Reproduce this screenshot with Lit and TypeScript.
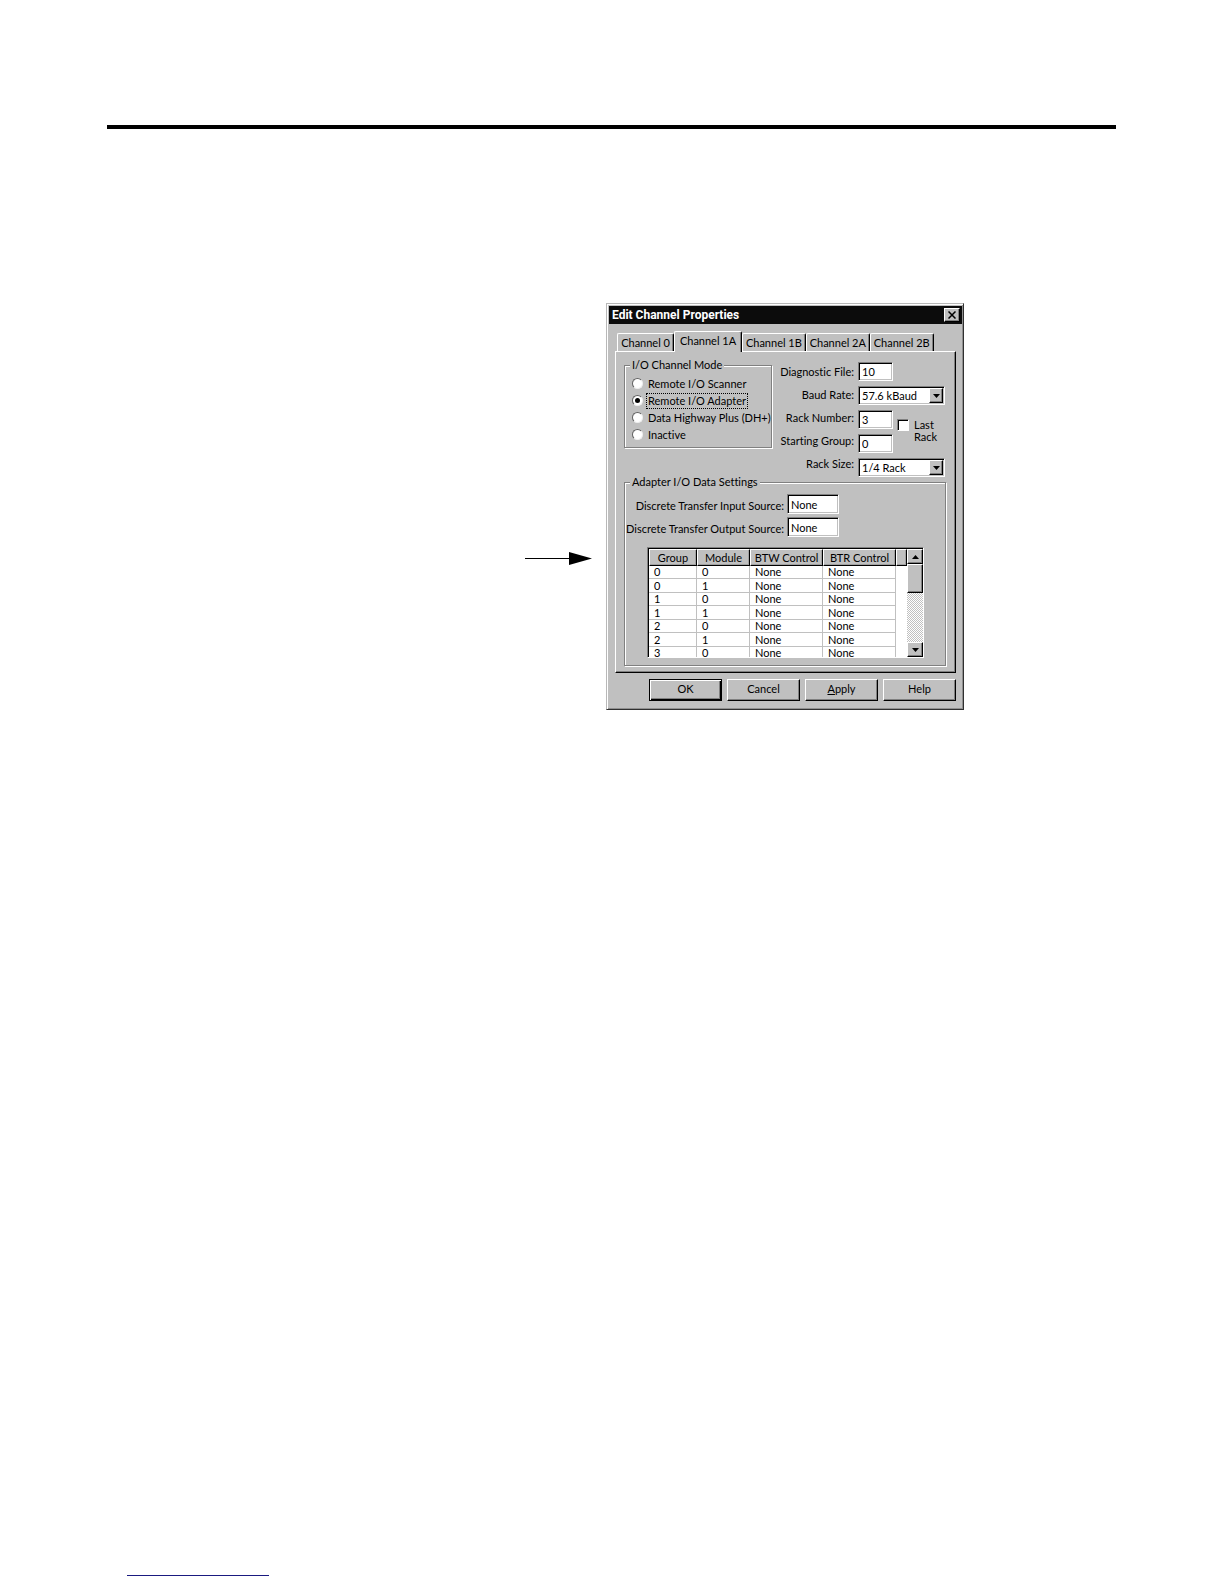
import { LitElement, css, html } from 'lit';
import { customElement, state } from 'lit/decorators.js';
import { classMap } from 'lit/directives/class-map.js';

const CHANNELS = ['Channel 0', 'Channel 1A', 'Channel 1B', 'Channel 2A', 'Channel 2B'];

const MODES = [
  'Remote I/O Scanner',
  'Remote I/O Adapter',
  'Data Highway Plus (DH+)',
  'Inactive',
];

const ROWS = [
  [0, 0],
  [0, 1],
  [1, 0],
  [1, 1],
  [2, 0],
  [2, 1],
  [3, 0],
];

@customElement('channel-dialog')
export class ChannelDialog extends LitElement {
  static styles = css`
    :host {
      display: block;
      box-sizing: border-box;
      padding: 2px 1px 8px 2px;
      border: 1px solid;
      border-color: #b8b8b8 #303030 #303030 #b8b8b8;
      background: #c0c0c0;
      box-shadow: inset 1px 1px #fff, inset -1px -1px #909090;
      color: #000;
      font-family: Lato, 'Liberation Sans', sans-serif;
      font-size: 11px;
      font-variant-ligatures: none;
      line-height: 14px;
    }
    * {
      box-sizing: border-box;
    }
    button, input, select {
      margin: 0;
      border-radius: 0;
      font: inherit;
      color: inherit;
      outline: none;
    }
    .title-bar {
      display: flex;
      align-items: center;
      justify-content: space-between;
      height: 18px;
      padding: 0 2px 0 3px;
      background: #0c0c0c;
      color: #fff;
    }
    .title {
      margin: 0;
      font: bold 12px/14px Roboto, 'Liberation Sans', sans-serif;
    }
    .raised {
      display: flex;
      align-items: center;
      justify-content: center;
      padding: 0;
      border: 1px solid;
      border-color: #fff #000 #000 #fff;
      background: #c0c0c0;
      box-shadow: inset -1px -1px #808080;
    }
    .close {
      width: 16px;
      height: 14px;
      color: #000;
    }
    .tabs {
      display: flex;
      align-items: flex-end;
      height: 27px;
      padding: 0 8px;
    }
    .tab {
      height: 18px;
      padding: 0;
      border: 1px solid;
      border-color: #fff #000 transparent #fff;
      border-bottom: 0;
      border-radius: 2px 2px 0 0;
      background: #c0c0c0;
      box-shadow: inset -1px 0 #808080;
      white-space: nowrap;
      flex: 64 1 0;
    }
    .tab:first-child {
      flex-grow: 57;
    }
    .tab.selected {
      position: relative;
      flex-grow: 68;
      height: 21px;
      margin-bottom: -1px;
      padding-bottom: 3px;
    }
    .tabs::after {
      content: '';
      flex: 21 1 0;
    }
    .panel {
      margin: 0 6px;
      padding: 6px 8px;
      border: 1px solid;
      border-color: #fff #000 #000 #fff;
      box-shadow: inset -1px -1px #808080;
    }
    .top {
      display: flex;
      justify-content: space-between;
      align-items: flex-start;
    }
    fieldset {
      min-width: 0;
      margin: 0;
      padding: 0;
      border: 1px solid #808080;
      box-shadow: inset 1px 1px #fff, 1px 1px #fff;
    }
    legend {
      margin-left: 5px;
      padding: 0 2px;
      background: #c0c0c0;
    }
    .modes {
      flex: 0 0 148px;
      padding: 3px 0 4px;
    }
    .mode {
      display: flex;
      align-items: center;
      gap: 4px;
      height: 17px;
      margin-left: 7px;
      white-space: nowrap;
    }
    .mode span {
      padding: 0 1px;
    }
    .mode.selected span {
      outline: 1px dotted #000;
    }
    .mode input {
      appearance: none;
      display: grid;
      place-items: center;
      flex: none;
      width: 11px;
      height: 11px;
      border: 1px solid;
      border-color: #606060 #eee #eee #606060;
      border-radius: 50%;
      background: #fff;
    }
    .mode input:checked::before {
      content: '';
      width: 5px;
      height: 5px;
      border-radius: 50%;
      background: #000;
    }
    .settings {
      display: flex;
      flex: 1;
      justify-content: flex-end;
      gap: 4px;
      padding: 4px 2px 0 0;
    }
    .captions {
      display: flex;
      flex-direction: column;
      gap: 9px;
      padding-top: 3px;
      text-align: right;
      white-space: nowrap;
    }
    .fields {
      display: grid;
      grid-template-columns: 35px 52px;
      grid-auto-rows: 19px;
      row-gap: 5px;
    }
    .field {
      min-width: 0;
      width: 100%;
      height: 19px;
      padding: 0 3px;
      border: 1px solid;
      border-color: #808080 #fff #fff #808080;
      background: #fff;
      box-shadow: inset 1px 1px #000, inset -1px -1px #c0c0c0;
    }
    .fields .field {
      grid-column-start: 1;
    }
    .combo {
      position: relative;
      grid-column: span 2;
    }
    .combo select {
      appearance: none;
    }
    .combo .raised {
      position: absolute;
      top: 2px;
      right: 2px;
      width: 14px;
      height: 15px;
      pointer-events: none;
    }
    .last-rack {
      display: flex;
      gap: 5px;
      grid-column: 2;
      grid-row: 3 / span 2;
      padding: 9px 0 0 4px;
      line-height: 12px;
    }
    .last-rack input {
      appearance: none;
      flex: none;
      width: 12px;
      height: 12px;
      border: 1px solid;
      border-color: #808080 #fff #fff #808080;
      background: #fff;
      box-shadow: inset 1px 1px #000;
    }
    .last-rack input:checked {
      background: #000;
    }
    .adapter {
      margin: -2px 1px 0 0;
      padding: 5px 21px 7px 0;
    }
    .sources {
      display: grid;
      grid-template-columns: 159px 52px;
      gap: 3px;
      align-items: center;
    }
    .sources label {
      padding-top: 3px;
      text-align: right;
      white-space: nowrap;
    }
    .sources .field {
      height: 20px;
    }
    .transfers {
      display: flex;
      height: 111px;
      margin: 10px 0 0 22px;
      border: 1px solid;
      border-color: #808080 #fff #fff #808080;
      background: #fff;
      box-shadow: inset 1px 1px #000;
      padding: 1px 0 0 1px;
      overflow: hidden;
    }
    .viewport {
      flex: 1;
      overflow: hidden;
    }
    table {
      width: 100%;
      border-collapse: separate;
      border-spacing: 0;
      table-layout: fixed;
      line-height: 12px;
    }
    .group {
      width: 48px;
    }
    .module {
      width: 53px;
    }
    .control {
      width: 73px;
    }
    th {
      height: 17px;
      padding: 0;
      border: 1px solid;
      border-color: #fff #000 #000 #fff;
      background: #c0c0c0;
      box-shadow: inset -1px -1px #a0a0a0;
      font-weight: normal;
      white-space: nowrap;
    }
    td {
      height: 13px;
      padding: 0 5px;
      border: solid #c0c0c0;
      border-width: 0 1px 1px 0;
    }
    tr:nth-child(even) td {
      height: 14px;
    }
    td:last-child {
      border: 0;
    }
    .scrollbar {
      display: flex;
      flex-direction: column;
      flex: 0 0 16px;
      background: repeating-conic-gradient(#fff 0 25%, #c0c0c0 0 50%) 0 0 / 2px 2px;
    }
    .arrow {
      width: 100%;
      height: 15px;
      flex: none;
    }
    .thumb {
      height: 29px;
      border: 1px solid;
      border-color: #fff #000 #000 #fff;
      background: #c0c0c0;
      box-shadow: inset -1px -1px #808080;
    }
    .arrow:last-child {
      margin-top: auto;
    }
    .actions {
      display: flex;
      justify-content: flex-end;
      gap: 5px;
      padding: 6px 6px 0;
    }
    .action {
      width: 73px;
      height: 22px;
      padding-bottom: 2px;
    }
    .action.default {
      border-color: #000;
      box-shadow: inset 1px 1px #fff, inset -1px -1px #000, inset -2px -2px #808080;
    }
    svg {
      display: block;
    }
  `;

  @state() private channel = 1;
  @state() private mode = 1;

  render () {
    return html`
      <header class="title-bar">
        <h1 class="title">Edit Channel Properties</h1>
        <button class="raised close" aria-label="Close">
          <svg width="8" height="8" viewBox="0 0 8 8">
            <path d="M0.5 0.5L7.5 7.5M7.5 0.5L0.5 7.5" stroke="#000" stroke-width="1.5" />
          </svg>
        </button>
      </header>
      <div class="tabs" role="tablist">
        ${CHANNELS.map((name, i) => html`
          <button
            class=${classMap({ tab: true, selected: i === this.channel })}
            role="tab"
            aria-selected=${i === this.channel}
            @click=${() => { this.channel = i; }}
          >${name}</button>
        `)}
      </div>
      <section class="panel" role="tabpanel">
        <div class="top">
          <fieldset class="modes">
            <legend>I/O Channel Mode</legend>
            ${MODES.map((name, i) => html`
              <label class=${classMap({ mode: true, selected: i === this.mode })}>
                <input
                  type="radio"
                  name="mode"
                  .checked=${i === this.mode}
                  @change=${() => { this.mode = i; }}
                >
                <span>${name}</span>
              </label>
            `)}
          </fieldset>
          <div class="settings">
            <div class="captions">
              <label for="file">Diagnostic File:</label>
              <label for="baud">Baud Rate:</label>
              <label for="rack">Rack Number:</label>
              <label for="start">Starting Group:</label>
              <label for="size">Rack Size:</label>
            </div>
            <div class="fields">
              <input class="field" id="file" value="10">
              ${this.renderCombo('baud', ['57.6 kBaud', '115.2 kBaud', '230.4 kBaud'])}
              <input class="field" id="rack" value="3">
              <label class="last-rack">
                <input type="checkbox">
                <span>Last<br>Rack</span>
              </label>
              <input class="field" id="start" value="0">
              ${this.renderCombo('size', ['1/4 Rack', '1/2 Rack', '3/4 Rack', 'Full Rack'])}
            </div>
          </div>
        </div>
        <fieldset class="adapter">
          <legend>Adapter I/O Data Settings</legend>
          <div class="sources">
            <label for="input-source">Discrete Transfer Input Source:</label>
            <input class="field" id="input-source" value="None">
            <label for="output-source">Discrete Transfer Output Source:</label>
            <input class="field" id="output-source" value="None">
          </div>
          ${this.renderTransfers()}
        </fieldset>
      </section>
      <footer class="actions">
        <button class="raised action default">OK</button>
        <button class="raised action">Cancel</button>
        <button class="raised action"><u>A</u>pply</button>
        <button class="raised action">Help</button>
      </footer>
    `;
  }

  renderCombo (id: string, options: string[]) {
    return html`
      <div class="combo">
        <select class="field" id=${id}>
          ${options.map(option => html`<option>${option}</option>`)}
        </select>
        <span class="raised">${this.renderTriangle('M0 0H7L3.5 4Z')}</span>
      </div>
    `;
  }

  renderTriangle (d: string) {
    return html`
      <svg width="7" height="4" viewBox="0 0 7 4"><path d=${d} /></svg>
    `;
  }

  renderTransfers () {
    return html`
      <div class="transfers">
        <div class="viewport">
          <table>
            <thead>
              <tr>
                <th class="group">Group</th>
                <th class="module">Module</th>
                <th class="control">BTW Control</th>
                <th class="control">BTR Control</th>
                <th></th>
              </tr>
            </thead>
            <tbody>
              ${ROWS.map(([group, module]) => html`
                <tr>
                  <td>${group}</td>
                  <td>${module}</td>
                  <td>None</td>
                  <td>None</td>
                  <td></td>
                </tr>
              `)}
            </tbody>
          </table>
        </div>
        <div class="scrollbar">
          <button class="raised arrow" aria-label="Scroll up">${this.renderTriangle('M0 4H7L3.5 0Z')}</button>
          <div class="thumb"></div>
          <button class="raised arrow" aria-label="Scroll down">${this.renderTriangle('M0 0H7L3.5 4Z')}</button>
        </div>
      </div>
    `;
  }
}

@customElement('app-root')
export class AppRoot extends LitElement {
  static styles = css`
    :host {
      display: flex;
      flex-direction: column;
      box-sizing: border-box;
      min-height: 100vh;
      padding: 125px 108px 8px 107px;
      background: #fff;
    }
    .rule {
      width: 100%;
      height: 4px;
      margin: 0;
      border: 0;
      background: #000;
    }
    .figure {
      display: flex;
      align-items: flex-start;
      justify-content: flex-end;
      gap: 14px;
      margin: 174px 152px 0 0;
    }
    .pointer {
      flex: none;
      margin-top: 249px;
    }
    .dialog {
      flex: 0 1 358px;
      min-width: 0;
    }
    .footer-line {
      width: 142px;
      height: 1px;
      margin: auto 0 0 20px;
      background: #1a1a80;
    }
  `;

  render () {
    return html`
      <hr class="rule">
      <main class="figure">
        <svg class="pointer" width="67" height="13" viewBox="0 0 67 13">
          <path d="M0 6H46V7H0ZM44 0L67 6.5L44 13Z" />
        </svg>
        <channel-dialog class="dialog"></channel-dialog>
      </main>
      <div class="footer-line"></div>
    `;
  }
}
